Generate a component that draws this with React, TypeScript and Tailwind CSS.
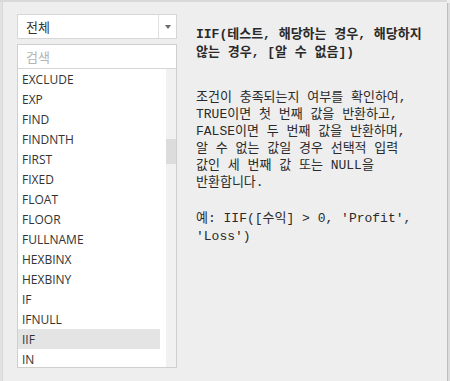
import React from "react";

const items = [
  "EXCLUDE",
  "EXP",
  "FIND",
  "FINDNTH",
  "FIRST",
  "FIXED",
  "FLOAT",
  "FLOOR",
  "FULLNAME",
  "HEXBINX",
  "HEXBINY",
  "IF",
  "IFNULL",
  "IIF",
  "IN",
];

const mono = { fontFamily: '"Liberation Mono", "Noto Sans CJK KR", monospace' };

export default function App() {
  return (
    <div className="relative w-[450px] h-[381px] bg-[#eeeeee] overflow-hidden flex">
      {/* frame edges */}
      <div className="absolute left-0 top-0 w-[3px] h-full bg-[#e2e2e2] border-r border-[#d8d8d8]" />
      <div className="absolute left-0 top-0 w-[447px] h-[2px] bg-[#d9d9d9]" />
      <div className="absolute right-0 top-[3px] w-[3px] h-[378px] bg-[#dcdcdc] border-l border-[#bdbdbd]" />

      {/* left column */}
      <div className="pl-[17px] pt-[14px] w-[176px] shrink-0 flex flex-col gap-[5px]">
        <div className="h-[25px] w-[160px] bg-white border border-[#d6d6d6] flex">
          <div
            className="flex-1 pl-[8px] text-[13px] leading-[23px] text-[#333]"
            style={{ fontFamily: '"Noto Sans CJK KR", sans-serif' }}
          >
            전체
          </div>
          <div className="w-[18px] border-l border-[#e0e0e0] flex items-center justify-center">
            <div className="w-0 h-0 border-l-[3px] border-r-[3px] border-t-[4px] border-l-transparent border-r-transparent border-t-[#6a6a6a]" />
          </div>
        </div>
        <div className="w-[160px] border border-[#cfcfcf] bg-white flex flex-col">
          <div
            className="h-[24px] pl-[8px] text-[13px] leading-[23px] text-[#b4b4b4] border-b border-[#d6d6d6]"
            style={{ fontFamily: '"Noto Sans CJK KR", sans-serif' }}
          >
            검색
          </div>
          <div className="h-[298px] flex overflow-hidden">
            <div className="w-[148px] flex flex-col">
              {items.map((it) => (
                <div
                  key={it}
                  className={`h-[20px] w-[142px] shrink-0 pl-[4px] text-[12px] leading-[21px] text-[#333] ${
                    it === "IIF" ? "bg-[#e4e4e4]" : ""
                  }`}
                  style={{ fontFamily: '"Open Sans", sans-serif' }}
                >
                  {it}
                </div>
              ))}
            </div>
            <div className="w-[10px] ml-auto bg-[#f1f1f1] flex flex-col">
              <div className="h-[70px]" />
              <div className="h-[25px] bg-[#dcdcdc]" />
            </div>
          </div>
        </div>
      </div>

      {/* right column */}
      <div className="pl-[20px] pt-[26px] text-[13px] leading-[17px] text-[#2a2a2a]" style={mono}>
        <div className="font-bold leading-[18px]">
          <div>IIF(테스트, 해당하는 경우, 해당하지</div>
          <div>않는 경우, [알 수 없음])</div>
        </div>
        <div className="mt-[27px]">
          <div>조건이 충족되는지 여부를 확인하여,</div>
          <div>TRUE이면 첫 번째 값을 반환하고,</div>
          <div>FALSE이면 두 번째 값을 반환하며,</div>
          <div>알 수 없는 값일 경우 선택적 입력</div>
          <div>값인 세 번째 값 또는 NULL을</div>
          <div>반환합니다.</div>
        </div>
        <div className="mt-[19px] leading-[18px]">
          <div>예: IIF([수익] &gt; 0, 'Profit',</div>
          <div>'Loss')</div>
        </div>
      </div>
    </div>
  );
}
